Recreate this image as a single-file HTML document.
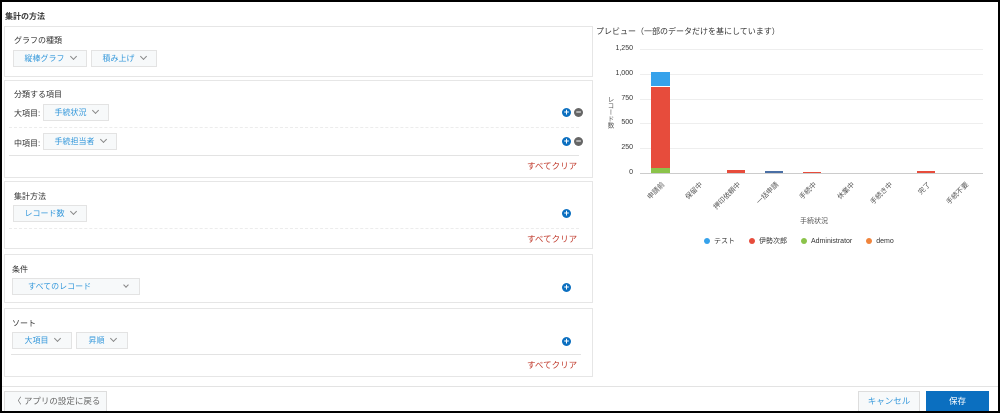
<!DOCTYPE html>
<html><head><meta charset="utf-8"><style>
*{box-sizing:border-box;margin:0;padding:0}
body{width:1000px;height:413px;overflow:hidden;background:#fff;font-family:"Liberation Sans","Noto Sans CJK JP",sans-serif;font-size:8px;color:#333;position:relative}
.frame{position:absolute;left:0;top:0;width:1000px;height:413px;border:2px solid #000;pointer-events:none;z-index:10}
.a{position:absolute}
.panel{position:absolute;left:4px;width:589px;border:1px solid #e6e6e6;background:#fff}
.lbl{position:absolute;font-size:8px;color:#333}
.sel{position:absolute;height:17px;border:1px solid #e3e3e3;background:#f7f9fa;color:#3498db;font-size:8px;line-height:15px;text-align:center;white-space:nowrap}
.sel:after{content:"";display:inline-block;width:4px;height:4px;border-right:1px solid #888;border-bottom:1px solid #888;transform:rotate(45deg);margin-left:6px;position:relative;top:-2px}
.sel.nc:after{display:none}
.chev{position:absolute;width:4px;height:4px;border-right:1px solid #888;border-bottom:1px solid #888;transform:rotate(45deg)}
.plus,.minus{position:absolute;width:9px;height:9px;border-radius:50%;background:#0b6fc0;color:#fff;font-size:9px;line-height:9px;text-align:center;font-weight:bold}
.minus{background:#666}
.clr{position:absolute;color:#c0392b;font-size:8.5px}
.dash{position:absolute;left:9px;width:570px;border-top:1px dashed #ececec}
.sol{position:absolute;left:9px;width:570px;border-top:1px solid #e3e3e3}
.yt{position:absolute;width:30px;text-align:right;font-size:7px;color:#333}
.gl{position:absolute;left:640px;width:343px;border-top:1px solid #eee}
.xl{position:absolute;font-size:7px;color:#555;transform:rotate(-45deg);transform-origin:right top;white-space:nowrap;text-align:right}
.dot{display:inline-block;width:6px;height:6px;border-radius:50%;margin-right:4px;vertical-align:-1px}
</style></head><body>
<div class="frame"></div>
<div class="lbl" style="left:5px;top:11px;font-weight:bold">集計の方法</div>

<div class="panel" style="top:26px;height:51px"></div>
<div class="lbl" style="left:14px;top:35px">グラフの種類</div>
<div class="sel" style="left:13px;top:50px;width:74px">縦棒グラフ</div>
<div class="sel" style="left:91px;top:50px;width:66px">積み上げ</div>

<div class="panel" style="top:80px;height:98px"></div>
<div class="lbl" style="left:14px;top:89px">分類する項目</div>
<div class="lbl" style="left:14px;top:108px">大項目:</div>
<div class="sel" style="left:43px;top:104px;width:66px">手続状況</div>
<div class="plus" style="left:562px;top:108px">+</div><div class="minus" style="left:574px;top:108px">−</div>
<div class="dash" style="top:127px"></div>
<div class="lbl" style="left:14px;top:138px">中項目:</div>
<div class="sel" style="left:43px;top:133px;width:74px">手続担当者</div>
<div class="plus" style="left:562px;top:137px">+</div><div class="minus" style="left:574px;top:137px">−</div>
<div class="sol" style="top:155px"></div>
<div class="clr" style="left:527px;top:160px">すべてクリア</div>

<div class="panel" style="top:181px;height:68px"></div>
<div class="lbl" style="left:14px;top:191px">集計方法</div>
<div class="sel" style="left:13px;top:205px;width:74px">レコード数</div>
<div class="plus" style="left:562px;top:209px">+</div>
<div class="dash" style="top:228px"></div>
<div class="clr" style="left:527px;top:233px">すべてクリア</div>

<div class="panel" style="top:254px;height:49px"></div>
<div class="lbl" style="left:12px;top:264px">条件</div>
<div class="sel nc" style="left:12px;top:278px;width:128px;text-align:left;padding-left:15px">すべてのレコード</div>
<div class="chev" style="left:124px;top:283px"></div>
<div class="plus" style="left:562px;top:283px">+</div>

<div class="panel" style="top:308px;height:69px"></div>
<div class="lbl" style="left:12px;top:318px">ソート</div>
<div class="sel" style="left:12px;top:332px;width:60px">大項目</div>
<div class="sel" style="left:76px;top:332px;width:52px">昇順</div>
<div class="plus" style="left:562px;top:337px">+</div>
<div class="sol" style="top:354px;left:11px"></div>
<div class="clr" style="left:527px;top:359px">すべてクリア</div>

<div class="a" style="left:0;top:386px;width:1000px;border-top:1px solid #e3e3e3"></div>
<div class="a" style="left:4px;top:391px;width:103px;height:21px;border:1px solid #ddd;background:#f7f9fa;color:#666;font-size:8.5px;line-height:19px;padding-left:8px">〈 アプリの設定に戻る</div>
<div class="a" style="left:858px;top:391px;width:62px;height:21px;border:1px solid #ddd;background:#f7f9fa;color:#3498db;font-size:8.5px;line-height:19px;text-align:center">キャンセル</div>
<div class="a" style="left:926px;top:391px;width:63px;height:21px;background:#0b6fc0;color:#fff;font-size:8.5px;line-height:21px;text-align:center">保存</div>

<div class="lbl" style="left:596px;top:26px">プレビュー（一部のデータだけを基にしています）</div>
<div class="gl" style="top:49px"></div><div class="gl" style="top:74px"></div><div class="gl" style="top:99px"></div><div class="gl" style="top:123px"></div><div class="gl" style="top:148px"></div>
<div class="a" style="left:640px;top:173px;width:343px;border-top:1px solid #ccc"></div>
<div class="yt" style="left:603px;top:45px">1,250</div>
<div class="yt" style="left:603px;top:70px">1,000</div>
<div class="yt" style="left:603px;top:95px">750</div>
<div class="yt" style="left:603px;top:119px">500</div>
<div class="yt" style="left:603px;top:144px">250</div>
<div class="yt" style="left:603px;top:169px">0</div>
<div class="a" style="left:604px;top:96px;font-size:6.5px;color:#555;writing-mode:vertical-rl">レコード数</div>

<div class="a" style="left:651px;top:72px;width:19px;height:14px;background:#36a2eb"></div>
<div class="a" style="left:651px;top:87px;width:19px;height:81px;background:#e74c3c"></div>
<div class="a" style="left:651px;top:168px;width:19px;height:5px;background:#8bc34a"></div>
<div class="a" style="left:727px;top:170px;width:18px;height:3px;background:#e74c3c"></div>
<div class="a" style="left:765px;top:171px;width:18px;height:2px;background:#4a6fa5"></div>
<div class="a" style="left:803px;top:172px;width:18px;height:1px;background:#e74c3c"></div>
<div class="a" style="left:917px;top:171px;width:18px;height:2px;background:#e74c3c"></div>

<div class="xl" style="right:340px;top:180px">申請前</div>
<div class="xl" style="right:302px;top:180px">保留中</div>
<div class="xl" style="right:264px;top:180px">押印依頼中</div>
<div class="xl" style="right:226px;top:180px">一括申請</div>
<div class="xl" style="right:188px;top:180px">手続中</div>
<div class="xl" style="right:150px;top:180px">休業中</div>
<div class="xl" style="right:112px;top:180px">手続き中</div>
<div class="xl" style="right:74px;top:180px">完了</div>
<div class="xl" style="right:36px;top:180px">手続不要</div>
<div class="a" style="left:800px;top:216px;font-size:7px;color:#555">手続状況</div>
<div class="a" style="left:704px;top:236px;font-size:7px;color:#333;white-space:nowrap">
<span class="dot" style="background:#36a2eb"></span>テスト　　<span class="dot" style="background:#e74c3c"></span>伊勢次郎　　<span class="dot" style="background:#8bc34a"></span>Administrator　　<span class="dot" style="background:#f0843c"></span>demo</div>
</body></html>
